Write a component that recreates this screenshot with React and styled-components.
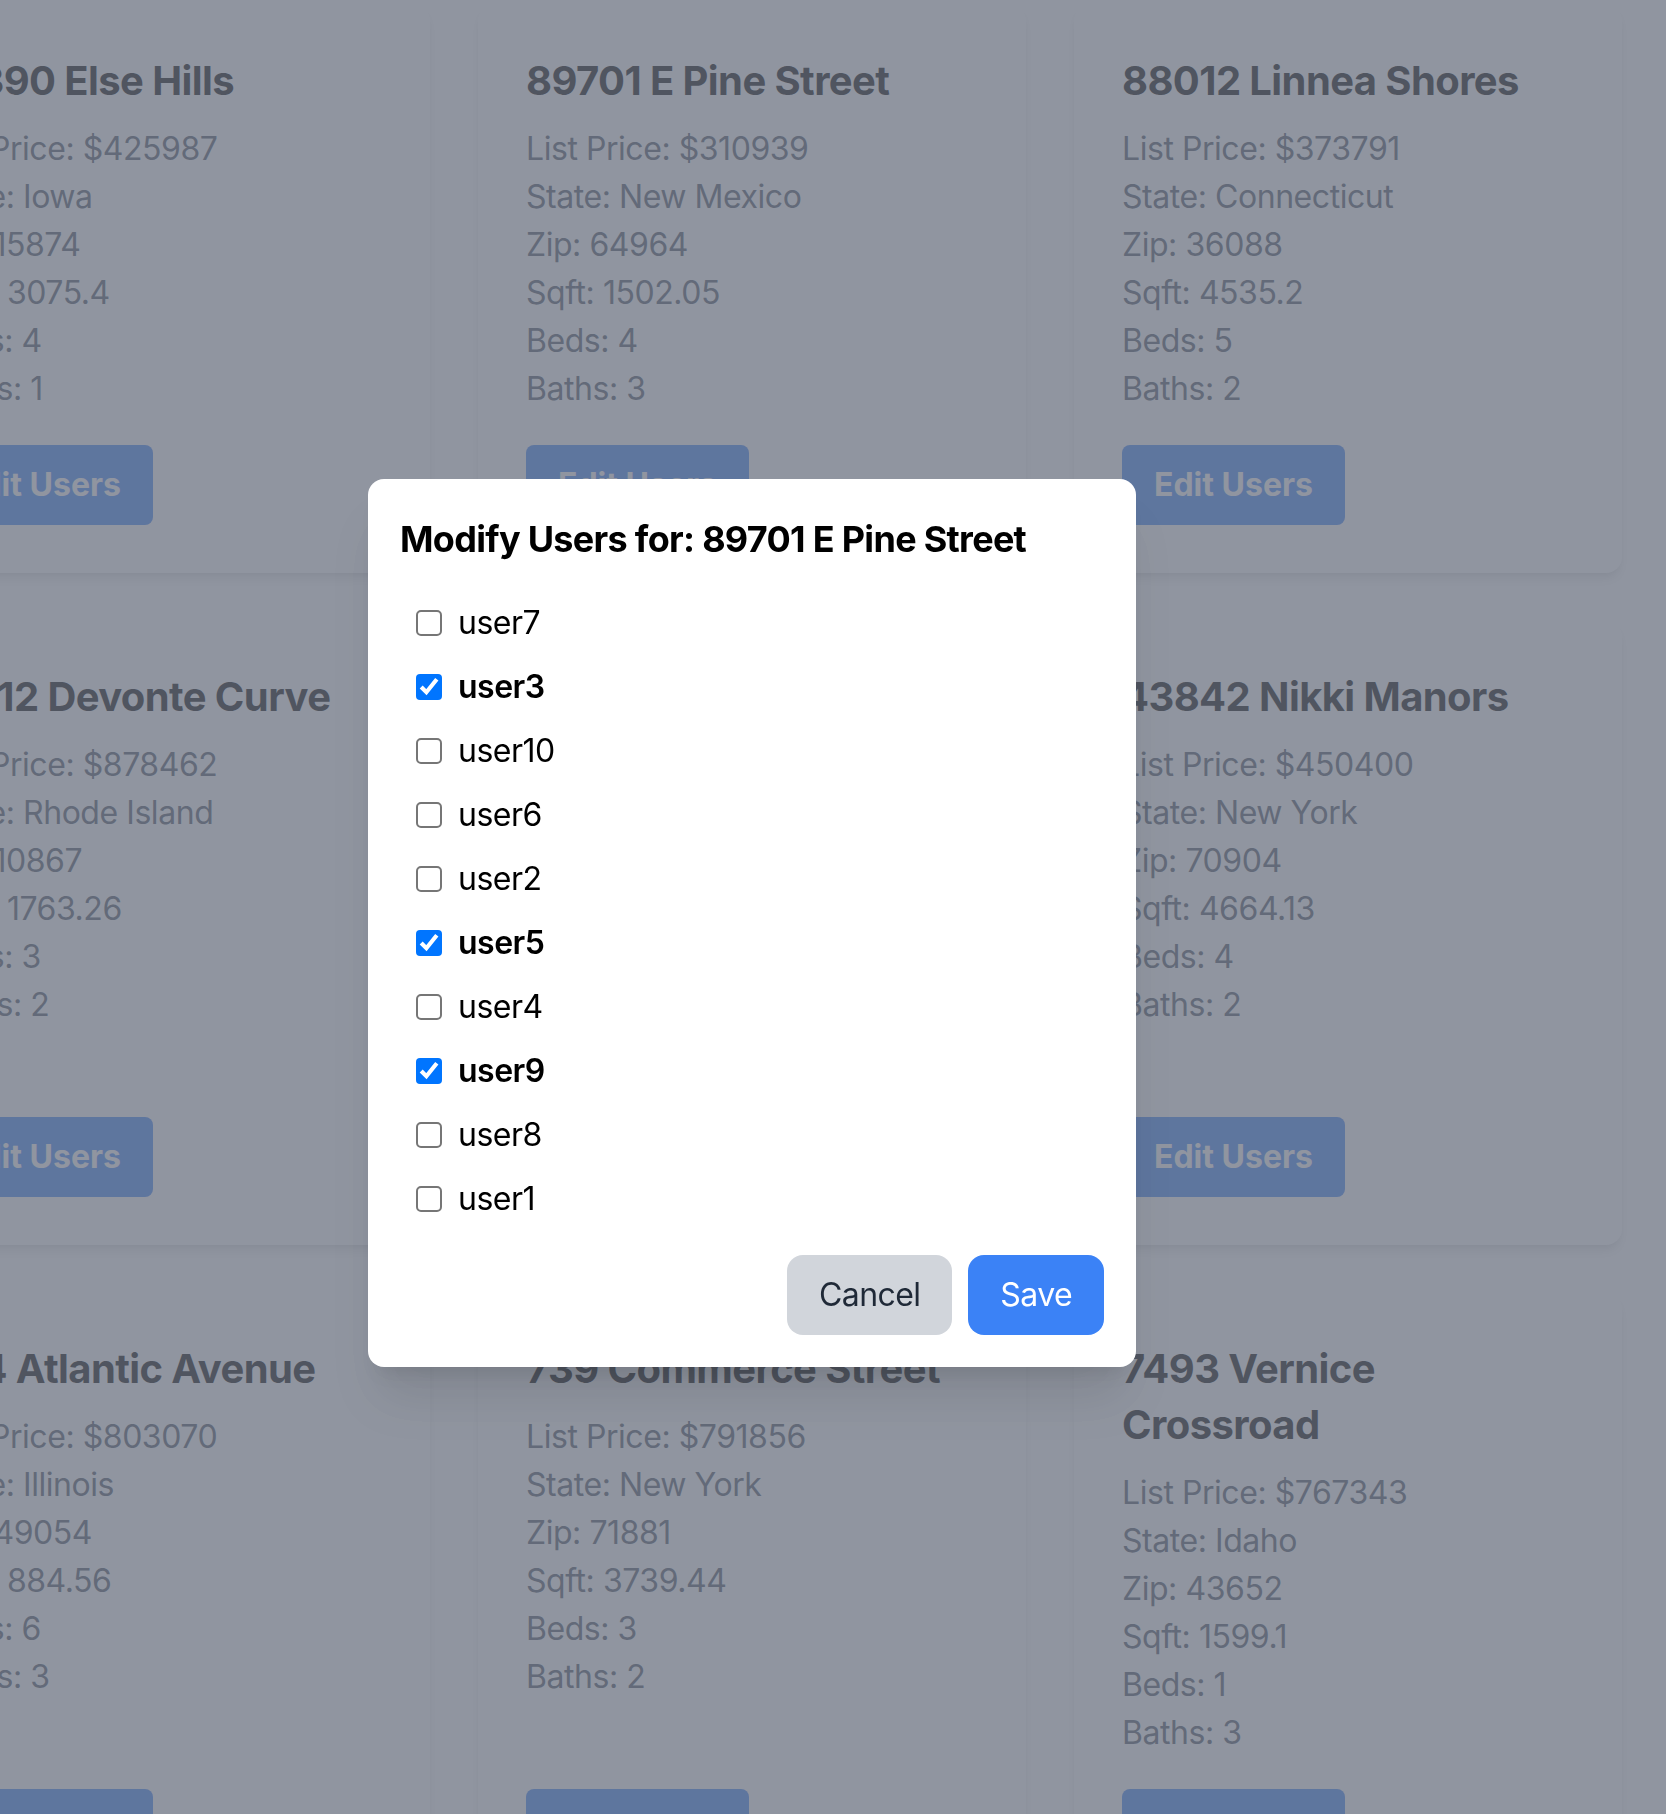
import React from "react";
import styled, { createGlobalStyle } from "styled-components";

const GlobalStyle = createGlobalStyle`
  html, body {
    margin: 0;
    padding: 0;
    background: #ffffff;
    font-family: Inter, "Noto Sans", "Liberation Sans", sans-serif;
    overflow: hidden;
  }
  * { box-sizing: border-box; }
`;

const Page = styled.main`
  width: 1666px;
  height: 1814px;
  overflow: hidden;
  padding-top: 5px;
`;

const Grid = styled.div`
  display: grid;
  grid-template-columns: repeat(3, 548px);
  gap: 48px;
  margin-left: -118px;
`;

const Card = styled.article`
  background: #ffffff;
  border-radius: 16px;
  box-shadow: 0 8px 12px -2px rgba(0, 0, 0, 0.1), 0 4px 8px -4px rgba(0, 0, 0, 0.1);
  padding: 48px;
  display: flex;
  flex-direction: column;
`;

const CardTitle = styled.h2`
  margin: 0 0 16px;
  font-size: 40px;
  line-height: 56px;
  font-weight: 700;
  color: #000000;
  letter-spacing: -0.6px;
`;

const Info = styled.div`
  margin-bottom: 32px;
`;

const InfoLine = styled.p`
  margin: 0;
  font-size: 32px;
  line-height: 48px;
  color: #4b5563;
  letter-spacing: -0.45px;
`;

const EditButton = styled.button`
  margin-top: auto;
  align-self: flex-start;
  border: none;
  border-radius: 8px;
  background: #3b82f6;
  color: #ffffff;
  font-family: inherit;
  font-size: 32px;
  line-height: 48px;
  font-weight: 700;
  padding: 16px 32px;
`;

const Overlay = styled.div`
  position: fixed;
  inset: 0;
  background: rgba(107, 114, 128, 0.75);
  display: flex;
  align-items: center;
  justify-content: center;
  padding: 32px 162px 0 0;
`;

const Modal = styled.section`
  width: 768px;
  background: #ffffff;
  border-radius: 16px;
  padding: 32px;
  box-shadow: 0 40px 50px -10px rgba(0, 0, 0, 0.1), 0 16px 20px -12px rgba(0, 0, 0, 0.1);
`;

const ModalTitle = styled.h3`
  margin: 0 0 32px;
  font-size: 36px;
  line-height: 56px;
  font-weight: 700;
  color: #000000;
  letter-spacing: -0.7px;
`;

const UserList = styled.div`
  display: flex;
  flex-direction: column;
  gap: 16px;
`;

const UserRow = styled.label`
  display: flex;
  align-items: center;
  gap: 16px;
  padding-left: 16px;
  font-size: 32px;
  line-height: 48px;
  color: #000000;
  letter-spacing: -0.5px;
  font-weight: ${(p) => (p.$checked ? 600 : 400)};
`;

const Check = styled.input`
  zoom: 2;
  margin: 0;
  width: 13px;
  height: 13px;
  accent-color: #0075ff;
`;

const Footer = styled.div`
  display: flex;
  justify-content: flex-end;
  gap: 16px;
  margin-top: 32px;
`;

const ActionButton = styled.button`
  border: none;
  border-radius: 16px;
  padding: 16px 32px;
  font-family: inherit;
  font-size: 32px;
  line-height: 48px;
  font-weight: 400;
  letter-spacing: -0.6px;
  background: ${(p) => (p.$primary ? "#3b82f6" : "#d1d5db")};
  color: ${(p) => (p.$primary ? "#ffffff" : "#1f2937")};
`;

const properties = [
  { address: "47390 Else Hills", price: 425987, state: "Iowa", zip: "15874", sqft: "3075.4", beds: 4, baths: 1 },
  { address: "89701 E Pine Street", price: 310939, state: "New Mexico", zip: "64964", sqft: "1502.05", beds: 4, baths: 3 },
  { address: "88012 Linnea Shores", price: 373791, state: "Connecticut", zip: "36088", sqft: "4535.2", beds: 5, baths: 2 },
  { address: "18312 Devonte Curve", price: 878462, state: "Rhode Island", zip: "10867", sqft: "1763.26", beds: 3, baths: 2 },
  { address: "2750 Schowalter Knolls Extension", price: 512345, state: "Ohio", zip: "44120", sqft: "2210.5", beds: 3, baths: 2 },
  { address: "43842 Nikki Manors", price: 450400, state: "New York", zip: "70904", sqft: "4664.13", beds: 4, baths: 2 },
  { address: "584 Atlantic Avenue", price: 803070, state: "Illinois", zip: "49054", sqft: "884.56", beds: 6, baths: 3 },
  { address: "739 Commerce Street", price: 791856, state: "New York", zip: "71881", sqft: "3739.44", beds: 3, baths: 2 },
  { address: "7493 Vernice Crossroad", price: 767343, state: "Idaho", zip: "43652", sqft: "1599.1", beds: 1, baths: 3 },
];

const users = [
  { name: "user7", checked: false },
  { name: "user3", checked: true },
  { name: "user10", checked: false },
  { name: "user6", checked: false },
  { name: "user2", checked: false },
  { name: "user5", checked: true },
  { name: "user4", checked: false },
  { name: "user9", checked: true },
  { name: "user8", checked: false },
  { name: "user1", checked: false },
];

function PropertyCard({ p }) {
  return (
    <Card>
      <CardTitle>{p.address}</CardTitle>
      <Info>
        <InfoLine>List Price: ${p.price}</InfoLine>
        <InfoLine>State: {p.state}</InfoLine>
        <InfoLine>Zip: {p.zip}</InfoLine>
        <InfoLine>Sqft: {p.sqft}</InfoLine>
        <InfoLine>Beds: {p.beds}</InfoLine>
        <InfoLine>Baths: {p.baths}</InfoLine>
      </Info>
      <EditButton type="button">Edit Users</EditButton>
    </Card>
  );
}

export default function App() {
  return (
    <>
      <GlobalStyle />
      <Page>
        <Grid>
          {properties.map((p) => (
            <PropertyCard key={p.address} p={p} />
          ))}
        </Grid>
      </Page>
      <Overlay>
        <Modal>
          <ModalTitle>Modify Users for: 89701 E Pine Street</ModalTitle>
          <UserList>
            {users.map((u) => (
              <UserRow key={u.name} $checked={u.checked}>
                <Check type="checkbox" defaultChecked={u.checked} />
                {u.name}
              </UserRow>
            ))}
          </UserList>
          <Footer>
            <ActionButton type="button">Cancel</ActionButton>
            <ActionButton type="button" $primary>Save</ActionButton>
          </Footer>
        </Modal>
      </Overlay>
    </>
  );
}
